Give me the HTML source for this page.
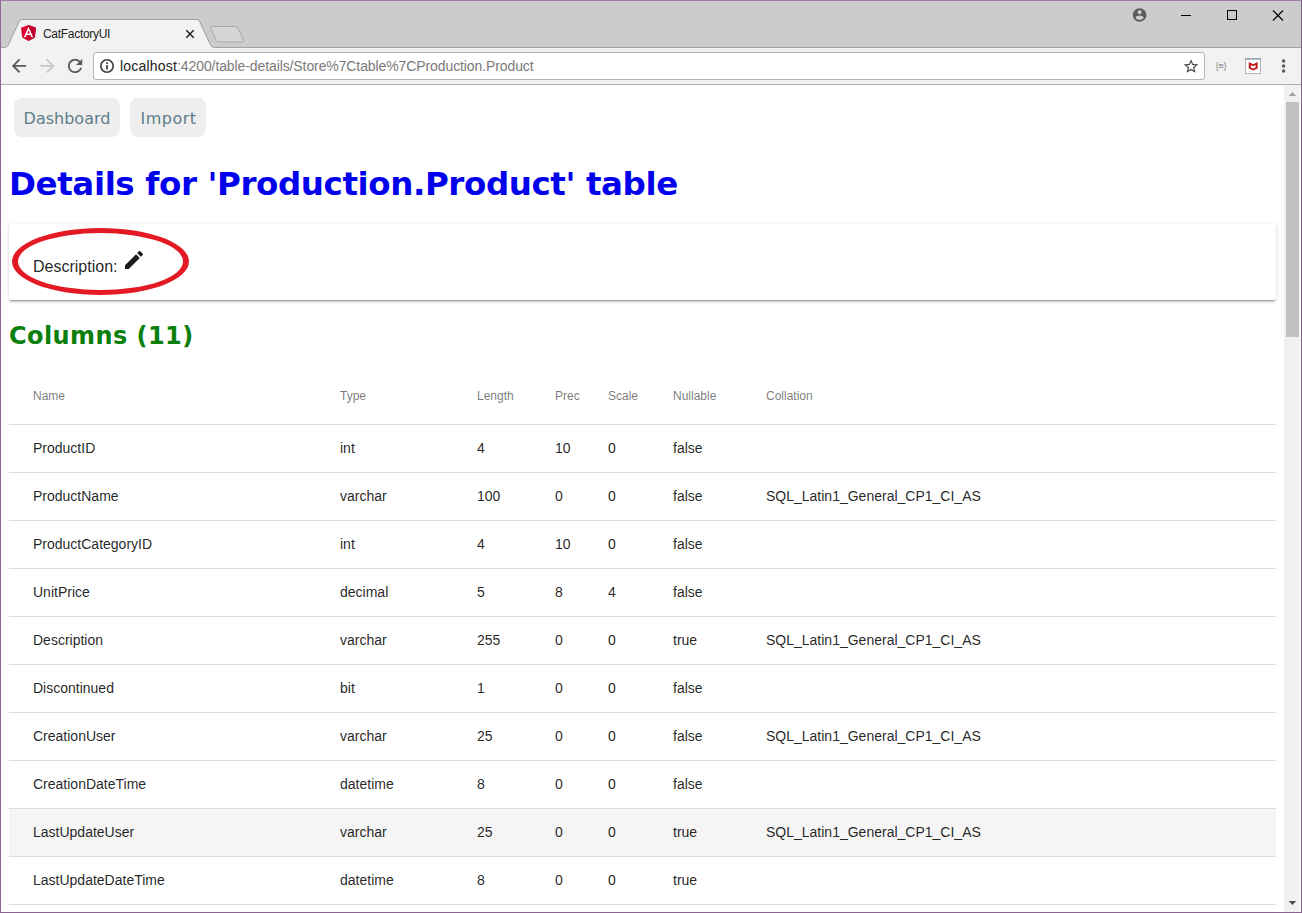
<!DOCTYPE html>
<html lang="en">
<head>
<meta charset="utf-8">
<title>CatFactoryUI</title>
<style>
*{box-sizing:border-box;margin:0;padding:0}
html,body{width:1302px;height:913px;overflow:hidden;background:#fff}
body{position:relative;font-family:"Liberation Sans",sans-serif;color:rgba(0,0,0,.87)}
.abs{position:absolute}
#win{position:absolute;left:0;top:0;width:1302px;height:913px;border:1px solid;border-color:#a47caa #7e5c86 #8a6390 #8f6796;overflow:hidden;background:#fff}
#titlebar{position:absolute;left:0;top:0;width:1300px;height:46px;background:#cccccc}
#toolbar{position:absolute;left:0;top:46px;width:1300px;height:38px;background:#f2f2f2;border-bottom:1px solid #b0b0b0}
#urlbox{position:absolute;left:92px;top:5px;width:1112px;height:28px;background:#fff;border:1px solid #b3b3b3;border-radius:3px}
#url{position:absolute;left:26px;top:4px;font-size:14px;line-height:18px;color:#7a7a7a;white-space:nowrap;letter-spacing:-.1px}
#url b{font-weight:normal;color:#222;letter-spacing:.2px}
#tabtitle{position:absolute;left:42px;top:25px;font-size:12px;line-height:16px;color:#222;white-space:nowrap;letter-spacing:-.3px}
#content{position:absolute;left:0;top:84px;width:1283px;height:827px;background:#fff;overflow:hidden}
#scroll{position:absolute;left:1283px;top:84px;width:16px;height:827px;background:#f1f1f1}
#thumb{position:absolute;left:2px;top:17px;width:13px;height:235px;background:#c1c1c1}
.btn{position:absolute;top:13px;height:39px;background:#eeeeee;border-radius:8px;font-family:"DejaVu Sans","Liberation Sans",sans-serif;font-size:16px;line-height:41px;color:#607d8b;text-align:center;white-space:nowrap;letter-spacing:0}
h1{position:absolute;left:8px;top:79px;font-family:"DejaVu Sans","Liberation Sans",sans-serif;font-weight:bold;font-size:32.5px;line-height:40px;color:#0000ee;white-space:nowrap;letter-spacing:-.4px}
h2{position:absolute;left:8px;top:234.500px;font-family:"DejaVu Sans","Liberation Sans",sans-serif;font-weight:bold;font-size:24px;line-height:32px;color:#0b7f0b;white-space:nowrap;letter-spacing:.42px}
#card{position:absolute;left:8px;top:139px;width:1267px;height:76px;background:#fff;border-radius:2px;box-shadow:0 3px 1px -2px rgba(0,0,0,.2),0 2px 2px 0 rgba(0,0,0,.14),0 1px 5px 0 rgba(0,0,0,.12)}
#desc{position:absolute;left:24px;top:34px;font-size:16px;line-height:18px;color:rgba(0,0,0,.87);white-space:nowrap}
#ellipse{position:absolute;left:11px;top:143px;width:177px;height:67px;border:5px solid #e31a23;border-left-width:6px;border-right-width:6px;border-radius:50%}
table{position:absolute;left:8px;top:283px;width:1267px;border-collapse:collapse;table-layout:fixed;font-size:14px}
th{height:56px;font-size:12px;font-weight:normal;color:rgba(0,0,0,.54);text-align:left;border-bottom:1px solid #dcdcdc;padding:0;vertical-align:middle}
td{height:48px;border-bottom:1px solid #dcdcdc;padding:0;vertical-align:middle;color:rgba(0,0,0,.87);white-space:nowrap}
th:first-child,td:first-child{padding-left:24px}
tr.hl td{background:#f5f5f5}
</style>
</head>
<body>
<div id="win">
  <div id="titlebar"></div>
  <div id="toolbar">
    <div id="urlbox">
      <div id="url"><b>localhost</b>:4200/table-details/Store%7Ctable%7CProduction.Product</div>
    </div>
  </div>
  <svg class="abs" style="left:-1px;top:-1px" width="1302" height="90" viewBox="0 0 1302 90">
    <!-- titlebar bottom line -->
    <path d="M1 47.500 H1301" stroke="#a2a2a2" stroke-width="1"/>
    <!-- active tab -->
    <path d="M4.500 47.500 Q7 47.500 8 45.300 L19.400 21 Q20.100 19.500 21.800 19.500 L197 19.500 Q198.700 19.500 199.400 21 L210.800 45.300 Q211.800 47.500 214.500 47.500 L215 49 L4 49 Z" fill="#f2f2f2"/>
    <path d="M4.500 47.500 Q7 47.500 8 45.300 L19.400 21 Q20.100 19.500 21.800 19.500 L197 19.500 Q198.700 19.500 199.400 21 L210.800 45.300 Q211.800 47.500 214.500 47.500" fill="none" stroke="#9c9c9c" stroke-width="1"/>
    <!-- new tab button -->
    <path d="M211.500 26.500 L235.500 26.500 Q237.300 26.500 238 28 L243.300 40 Q244 42 242 42 L218.500 42 Q216.700 42 216 40.500 L210.600 28.300 Q210 26.500 211.500 26.500 Z" fill="#d5d5d5" stroke="#a9a9a9" stroke-width="1"/>
    <!-- angular favicon -->
    <g transform="translate(18.500,22.700) scale(0.080)">
      <path d="M125 30 L31.900 63.200 L46.100 186.300 L125 230 L203.900 186.300 L218.100 63.200 Z" fill="#dd0031"/>
      <path d="M125 30 V52.200 V52.100 V153.400 V230 L203.900 186.300 L218.100 63.200 Z" fill="#c3002f"/>
      <path d="M125 52.100 L66.800 182.600 H88.500 L100.200 153.400 H149.600 L161.300 182.600 H183 L125 52.100 Z M142 135.400 H108 L125 94.500 Z" fill="#fff" fill-rule="evenodd"/>
    </g>
    <!-- tab close -->
    <path d="M186.300 30.300 L193.700 37.700 M193.700 30.300 L186.300 37.700" stroke="#1a1a1a" stroke-width="1.400" fill="none"/>
    <!-- profile -->
    <g transform="translate(1131.500,6.900) scale(0.675)">
      <path d="M12 2C6.480 2 2 6.480 2 12s4.480 10 10 10 10-4.480 10-10S17.520 2 12 2zm0 3c1.660 0 3 1.340 3 3s-1.340 3-3 3-3-1.340-3-3 1.340-3 3-3zm0 14.200c-2.500 0-4.710-1.280-6-3.220.030-1.990 4-3.080 6-3.080 1.990 0 5.970 1.090 6 3.080-1.290 1.940-3.500 3.220-6 3.220z" fill="#5c5c5c"/>
    </g>
    <!-- window controls -->
    <path d="M1181 15.500 H1191" stroke="#000" stroke-width="1"/>
    <rect x="1227.500" y="10.500" width="9" height="9" fill="none" stroke="#000" stroke-width="1"/>
    <path d="M1273 10.500 L1283 20.500 M1283 10.500 L1273 20.500" stroke="#000" stroke-width="1.100"/>
    <!-- back -->
    <g transform="translate(8.300,55.300) scale(0.890)"><path d="M20 11H7.830l5.590-5.590L12 4l-8 8 8 8 1.410-1.410L7.830 13H20v-2z" fill="#5a5a5a"/></g>
    <!-- forward -->
    <g transform="translate(57.900,55.300) scale(-0.890,0.890)"><path d="M20 11H7.830l5.590-5.590L12 4l-8 8 8 8 1.410-1.410L7.830 13H20v-2z" fill="#c9c9c9"/></g>
    <!-- reload -->
    <g transform="translate(64.400,55.300) scale(0.890)"><path d="M17.650 6.350C16.200 4.900 14.210 4 12 4c-4.420 0-7.990 3.580-7.990 8s3.570 8 7.990 8c3.730 0 6.840-2.550 7.730-6h-2.080c-.82 2.330-3.040 4-5.650 4-3.310 0-6-2.690-6-6s2.690-6 6-6c1.660 0 3.140.69 4.220 1.780L13 11h7V4l-2.350 2.350z" fill="#5a5a5a"/></g>
    <!-- info -->
    <circle cx="107" cy="66" r="6.200" fill="none" stroke="#3c3c3c" stroke-width="1.600"/>
    <rect x="106.200" y="65" width="1.700" height="4.600" fill="#3c3c3c"/>
    <rect x="106.200" y="62.300" width="1.700" height="1.700" fill="#3c3c3c"/>
    <!-- star -->
    <g transform="translate(1182.400,57.700) scale(0.720)"><path d="M22 9.240l-7.190-.62L12 2 9.190 8.630 2 9.240l5.460 4.730L5.820 21 12 17.270 18.180 21l-1.630-7.030L22 9.240zM12 15.400l-3.760 2.270 1-4.280-3.320-2.880 4.380-.38L12 6.100l1.710 4.040 4.380.38-3.320 2.880 1 4.280L12 15.400z" fill="#454545"/></g>
    <!-- json ext -->
    <text x="1221" y="69.300" font-family="Liberation Sans, sans-serif" font-size="9.500" fill="#8c8c8c" text-anchor="middle" letter-spacing="-0.3">{≡}</text>
    <!-- mcafee -->
    <rect x="1245.500" y="58.500" width="15" height="15" fill="#fff" stroke="#aeb9bd" stroke-width="1"/>
    <path d="M1245 59 H1261" stroke="#90a4ad" stroke-width="1.400"/>
    <path d="M1248.800 62 L1253.200 64.200 L1257.600 62 V68.500 L1253.200 70.600 L1248.800 68.500 Z M1250.800 65 V67.500 L1253.200 68.600 L1255.600 67.500 V65 L1253.200 66.200 Z" fill="#c01818" fill-rule="evenodd"/>
    <!-- menu dots -->
    <circle cx="1283.600" cy="61" r="1.700" fill="#5a5a5a"/>
    <circle cx="1283.600" cy="66" r="1.700" fill="#5a5a5a"/>
    <circle cx="1283.600" cy="71" r="1.700" fill="#5a5a5a"/>
  </svg>
  <div id="tabtitle">CatFactoryUI</div>
  <div id="content">
    <div class="btn" style="left:13px;width:106px">Dashboard</div>
    <div class="btn" style="left:129px;width:76px;letter-spacing:.5px;padding-left:1px">Import</div>
    <h1>Details for 'Production.Product' table</h1>
    <div id="card">
      <div id="desc">Description:</div>
      <svg class="abs" style="left:113px;top:24px" width="24" height="24" viewBox="0 0 24 24">
        <path d="M3 17.250V21h3.750L17.810 9.940l-3.750-3.750L3 17.250zM20.710 7.040a.996.996 0 0 0 0-1.410l-2.340-2.340a.996.996 0 0 0-1.410 0l-1.830 1.830 3.750 3.750 1.830-1.830z" fill="#1c1c1c"/>
      </svg>
    </div>
    <div id="ellipse"></div>
    <h2>Columns (11)</h2>
    <table>
      <colgroup><col style="width:331px"><col style="width:137px"><col style="width:78px"><col style="width:53px"><col style="width:65px"><col style="width:93px"><col></colgroup>
      <thead><tr><th>Name</th><th>Type</th><th>Length</th><th>Prec</th><th>Scale</th><th>Nullable</th><th>Collation</th></tr></thead>
      <tbody>
        <tr><td>ProductID</td><td>int</td><td>4</td><td>10</td><td>0</td><td>false</td><td></td></tr>
        <tr><td>ProductName</td><td>varchar</td><td>100</td><td>0</td><td>0</td><td>false</td><td>SQL_Latin1_General_CP1_CI_AS</td></tr>
        <tr><td>ProductCategoryID</td><td>int</td><td>4</td><td>10</td><td>0</td><td>false</td><td></td></tr>
        <tr><td>UnitPrice</td><td>decimal</td><td>5</td><td>8</td><td>4</td><td>false</td><td></td></tr>
        <tr><td>Description</td><td>varchar</td><td>255</td><td>0</td><td>0</td><td>true</td><td>SQL_Latin1_General_CP1_CI_AS</td></tr>
        <tr><td>Discontinued</td><td>bit</td><td>1</td><td>0</td><td>0</td><td>false</td><td></td></tr>
        <tr><td>CreationUser</td><td>varchar</td><td>25</td><td>0</td><td>0</td><td>false</td><td>SQL_Latin1_General_CP1_CI_AS</td></tr>
        <tr><td>CreationDateTime</td><td>datetime</td><td>8</td><td>0</td><td>0</td><td>false</td><td></td></tr>
        <tr class="hl"><td>LastUpdateUser</td><td>varchar</td><td>25</td><td>0</td><td>0</td><td>true</td><td>SQL_Latin1_General_CP1_CI_AS</td></tr>
        <tr><td>LastUpdateDateTime</td><td>datetime</td><td>8</td><td>0</td><td>0</td><td>true</td><td></td></tr>
        <tr><td>Timestamp</td><td>timestamp</td><td>8</td><td>0</td><td>0</td><td>true</td><td></td></tr>
      </tbody>
    </table>
  </div>
  <div id="scroll">
    <div id="thumb"></div>
    <svg class="abs" style="left:0;top:0" width="17" height="827" viewBox="0 0 17 827">
      <path d="M4.700 11 L8.500 7 L12.300 11 Z" fill="#a3a3a3"/>
      <path d="M4.700 816 L8.500 820 L12.300 816 Z" fill="#505050"/>
    </svg>
  </div>
</div>
</body>
</html>
